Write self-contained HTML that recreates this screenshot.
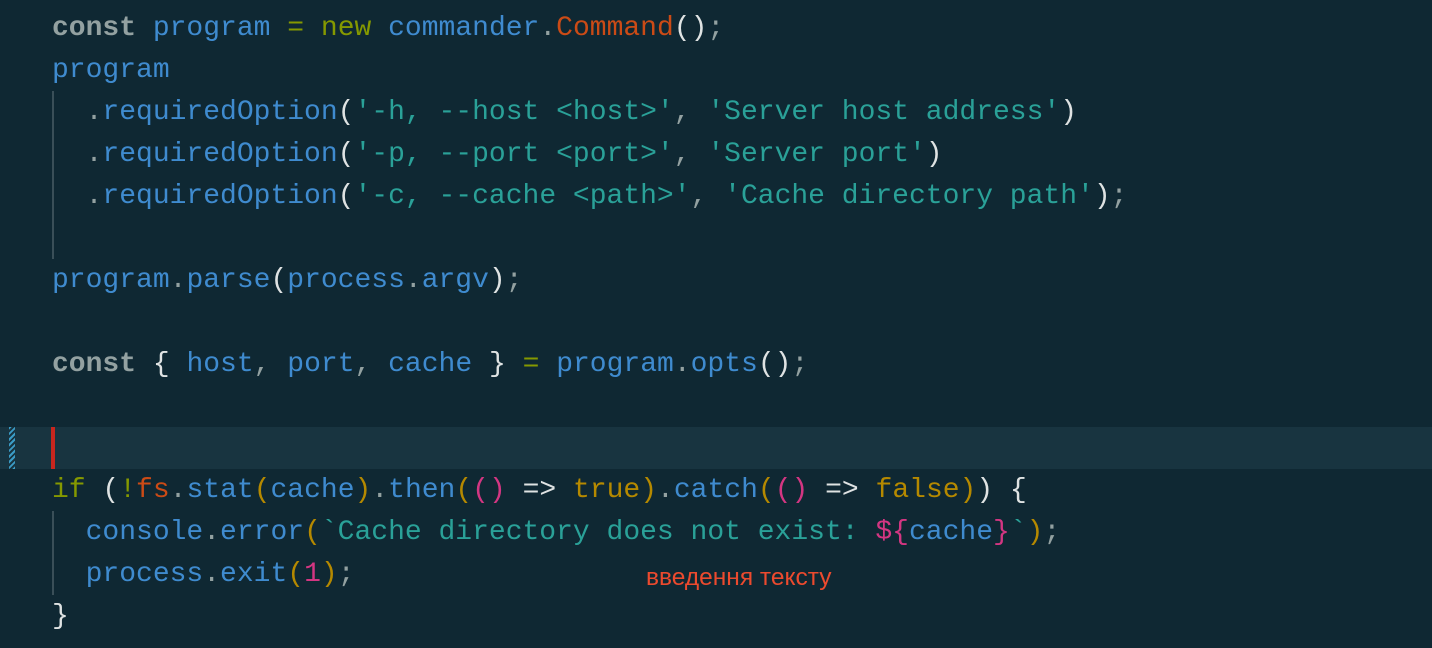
<!DOCTYPE html>
<html><head><meta charset="utf-8"><style>
body{margin:0;background:#0f2833;width:1432px;height:648px;overflow:hidden;position:relative}
.l{position:absolute;left:52px;height:42px;line-height:42px;padding-top:6px;font:28px "Liberation Mono","DejaVu Sans Mono",monospace;color:#93a1a1;white-space:pre}
.k{font-weight:bold;color:#93a1a1}.b{color:#3f8bcf}.g{color:#859900}.o{color:#cb4b16}.c{color:#2aa198}.y{color:#b58900}.m{color:#d33682}.w{color:#dfe3e3}
.guide{position:absolute;left:52px;width:2px;background:#3a4f58}
</style></head><body>
<div style="position:absolute;left:0;top:427px;width:1432px;height:42px;background:#183440"></div>
<div style="position:absolute;left:51px;top:427px;width:4px;height:42px;background:#c8261e"></div>
<div style="position:absolute;left:9px;top:427px;width:6px;height:42px;background:repeating-linear-gradient(135deg,#3a9bc5 0 2px,transparent 2px 4px)"></div>
<div class="guide" style="top:91px;height:168px"></div>
<div class="guide" style="top:511px;height:84px"></div>
<div class="l" style="top:7px"><span class="k">const</span> <span class="b">program</span> <span class="g">=</span> <span class="g">new</span> <span class="b">commander</span>.<span class="o">Command</span><span class="w">()</span>;</div>
<div class="l b" style="top:49px">program</div>
<div class="l" style="top:91px">  .<span class="b">requiredOption</span><span class="w">(</span><span class="c">'-h, --host &lt;host&gt;'</span>, <span class="c">'Server host address'</span><span class="w">)</span></div>
<div class="l" style="top:133px">  .<span class="b">requiredOption</span><span class="w">(</span><span class="c">'-p, --port &lt;port&gt;'</span>, <span class="c">'Server port'</span><span class="w">)</span></div>
<div class="l" style="top:175px">  .<span class="b">requiredOption</span><span class="w">(</span><span class="c">'-c, --cache &lt;path&gt;'</span>, <span class="c">'Cache directory path'</span><span class="w">)</span>;</div>
<div class="l" style="top:259px"><span class="b">program</span>.<span class="b">parse</span><span class="w">(</span><span class="b">process</span>.<span class="b">argv</span><span class="w">)</span>;</div>
<div class="l" style="top:343px"><span class="k">const</span> <span class="w">{</span> <span class="b">host</span>, <span class="b">port</span>, <span class="b">cache</span> <span class="w">}</span> <span class="g">=</span> <span class="b">program</span>.<span class="b">opts</span><span class="w">()</span>;</div>
<div class="l" style="top:469px"><span class="g">if</span> <span class="w">(</span><span class="g">!</span><span class="o">fs</span>.<span class="b">stat</span><span class="y">(</span><span class="b">cache</span><span class="y">)</span>.<span class="b">then</span><span class="y">(</span><span class="m">()</span> <span class="w">=&gt;</span> <span class="y">true</span><span class="y">)</span>.<span class="b">catch</span><span class="y">(</span><span class="m">()</span> <span class="w">=&gt;</span> <span class="y">false</span><span class="y">)</span><span class="w">)</span> <span class="w">{</span></div>
<div class="l" style="top:511px">  <span class="b">console</span>.<span class="b">error</span><span class="y">(</span><span class="c">`Cache directory does not exist: </span><span class="m">${</span><span class="b">cache</span><span class="m">}</span><span class="c">`</span><span class="y">)</span>;</div>
<div class="l" style="top:553px">  <span class="b">process</span>.<span class="b">exit</span><span class="y">(</span><span class="m">1</span><span class="y">)</span>;</div>
<div class="l w" style="top:595px">}</div>
<div style="position:absolute;left:646px;top:564px;font:24.5px 'Liberation Sans',sans-serif;color:#ec4a2e">введення тексту</div>
</body></html>
